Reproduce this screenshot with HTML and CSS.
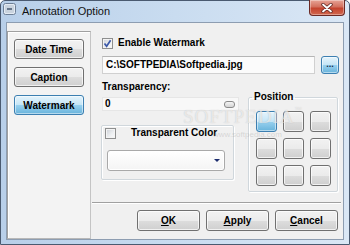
FILE: index.html
```html
<!DOCTYPE html>
<html>
<head>
<meta charset="utf-8">
<link rel="stylesheet" href="styles.css">
</head>
<body>
<div class="window">
  <div class="titlebar">
    <svg class="app-icon" width="13" height="12" viewBox="0 0 13 12">
      <rect x="0.5" y="0.5" width="12" height="11" rx="2" fill="#e4ebf3" stroke="#6d7f96"/>
      <rect x="2" y="2" width="9" height="8" rx="1" fill="#c9d3de"/>
      <rect x="4" y="5" width="5" height="2" fill="#66768a"/>
    </svg>
    <span class="title">Annotation Option</span>
    <div class="close">
      <svg width="14" height="10" viewBox="0 0 14 10">
        <path d="M3 1.5 L11 8.5 M11 1.5 L3 8.5" stroke="#5e2621" stroke-width="3.4" stroke-linecap="round"/>
        <path d="M3 1.5 L11 8.5 M11 1.5 L3 8.5" stroke="#ffffff" stroke-width="1.8" stroke-linecap="round"/>
      </svg>
    </div>
  </div>
  <div class="client">
    <div class="side">
      <div class="btn side-btn">Date Time</div>
      <div class="btn side-btn">Caption</div>
      <div class="btn side-btn active">Watermark</div>
    </div>
    <div class="main">
      <div class="check-row">
        <span class="checkbox checked">
          <svg width="9" height="9" viewBox="0 0 9 9"><path d="M1.5 4.5 L3.6 7.2 L7.6 1.2" fill="none" stroke="#3b58a8" stroke-width="1.7"/></svg>
        </span>
        <span class="label">Enable Watermark</span>
      </div>
      <div class="path-row">
        <div class="textbox">C:\SOFTPEDIA\Softpedia.jpg</div>
        <div class="btn active dots">...</div>
      </div>
      <div class="lower">
        <div class="left-col">
          <div class="label trans-label">Transparency:</div>
          <div class="slider">
            <span class="label">0</span>
            <span class="thumb"></span>
          </div>
          <div class="group">
            <div class="group-head">
              <span class="checkbox"></span>
              <span class="label group-title">Transparent Color</span>
            </div>
            <div class="combo"><span class="arrow"></span></div>
          </div>
        </div>
        <fieldset class="position">
          <legend class="label">Position</legend>
          <div class="pos-grid">
            <div class="btn pos active"></div>
            <div class="btn pos"></div>
            <div class="btn pos"></div>
            <div class="btn pos"></div>
            <div class="btn pos"></div>
            <div class="btn pos"></div>
            <div class="btn pos"></div>
            <div class="btn pos"></div>
            <div class="btn pos"></div>
          </div>
        </fieldset>
      </div>
      <div class="separator"></div>
      <div class="actions">
        <div class="btn action"><u>O</u>K</div>
        <div class="btn action"><u>A</u>pply</div>
        <div class="btn action"><u>C</u>ancel</div>
      </div>
    </div>
  </div>
  <div class="wm">SOFTPEDIA<span class="tm">™</span></div>
  <div class="wm-url">www.softpedia.com</div>
</div>
</body>
</html>
```
FILE: styles.css
```css
* { box-sizing: border-box; }
html, body { margin: 0; padding: 0; }
body {
  width: 350px; height: 245px; overflow: hidden;
  font-family: "Liberation Sans", Arial, sans-serif;
  font-size: 10px;
  color: #000;
}
.window {
  position: relative;
  width: 350px; height: 245px;
  border: 1px solid #4a5a70;
  border-radius: 5px 5px 0 0;
  background: linear-gradient(to right, #b8cfe9 0%, #c9dcf0 50%, #dae7f5 100%);
  display: flex; flex-direction: column;
}
.titlebar {
  height: 21px;
  display: flex; align-items: flex-start;
  padding-left: 2px;
}
.app-icon { margin-top: 2px; }
.title {
  margin-left: 6px; margin-top: 3px;
  font-size: 11px; line-height: 14px;
  color: #111;
}
.close {
  margin-left: auto; margin-right: 4px; margin-top: -1px;
  width: 36px; height: 16px;
  border: 1px solid #6b2a25;
  border-top: none;
  border-radius: 0 0 4px 4px;
  background: linear-gradient(#e7a496 0%, #d3705e 45%, #c4432e 55%, #d1684f 100%);
  box-shadow: inset 0 0 0 1px rgba(255,255,255,0.35);
  display: flex; align-items: center; justify-content: center;
}
.client {
  margin: 0 5px;
  height: 218px;
  background: #f0f0f0;
  border: 1px solid #8d9db1;
  display: flex;
}
.side {
  width: 84px;
  margin-top: 8px;
  height: 208px;
  border: 1px solid #a0a0a0;
  border-bottom-color: #b8b8b8;
  border-right-color: #c4c4c4;
  box-shadow: inset 1px 1px 0 #fff;
  background: #f3f3f3;
  padding: 7px 6px 0 6px;
  display: flex; flex-direction: column; gap: 8px;
}
.btn {
  border: 1px solid #707070;
  border-radius: 3px;
  background: linear-gradient(#f2f2f2 0%, #ebebeb 50%, #dddddd 51%, #cfcfcf 100%);
  box-shadow: inset 0 0 0 1px rgba(255,255,255,0.7);
  font-weight: bold;
  display: flex; align-items: center; justify-content: center;
}
.btn.active {
  border-color: #3c7fb1;
  background: linear-gradient(#e5f4fc 0%, #c4e5f6 50%, #98d1ef 51%, #68b3db 100%);
  box-shadow: inset 0 0 0 1px rgba(255,255,255,0.5);
}
.side-btn { height: 20px; }
.main {
  flex: 1;
  display: flex; flex-direction: column;
}
.label { font-weight: bold; font-size: 10px; line-height: 12px; }
.check-row {
  margin-top: 14px; padding-left: 11px;
  height: 12px;
  display: flex; align-items: center;
}
.checkbox {
  width: 11px; height: 11px;
  border: 1px solid #8e8f8f;
  background: linear-gradient(135deg, #cbcfd5 0%, #eef0f2 60%, #fafafa 100%);
  box-shadow: inset 0 0 0 1px #f4f4f4;
  display: flex; align-items: center; justify-content: center;
  flex: none;
}
.check-row .label { margin-left: 5px; }
.path-row {
  margin-top: 7px; padding-left: 11px;
  height: 18px;
  display: flex; gap: 6px;
}
.textbox {
  width: 213px; height: 18px;
  border: 1px solid #d0d0d0;
  border-top-color: #b5b5b5;
  background: #fbfbfb;
  font-weight: bold;
  padding-left: 3px;
  line-height: 16px;
}
.dots {
  width: 18px; height: 18px;
  font-size: 9px; line-height: 1;
  padding-bottom: 2px;
  color: #1b2b4b;
}
.lower {
  margin-top: 7px;
  display: flex;
  padding-left: 10px;
}
.left-col { width: 138px; display: flex; flex-direction: column; }
.trans-label { margin-left: 1px; height: 12px; }
.slider {
  margin-top: 4px; margin-left: 1px;
  width: 137px; height: 14px;
  background: #f8f8f8;
  border: 1px solid #e6e6e6;
  display: flex; align-items: center;
  padding-left: 2px;
}
.thumb {
  margin-left: auto; margin-right: 3px;
  width: 11px; height: 7px;
  border: 1px solid #8a8a8a;
  border-radius: 3px;
  background: linear-gradient(#f4f4f4, #d4d4d4);
}
.group {
  margin-top: 14px;
  width: 133px; height: 55px;
  border: 1px solid #d0d7dc;
  box-shadow: inset 1px 1px 0 #fff, 1px 1px 0 #fff;
  border-radius: 2px;
  padding: 1px 0 0 3px;
}
.group-head { display: flex; align-items: center; height: 12px; }
.group-title { margin-left: 15px; }
.combo {
  position: relative;
  margin-top: 11px; margin-left: 2px;
  width: 118px; height: 21px;
  border: 1px solid #a9a9a9;
  border-radius: 3px;
  background: linear-gradient(#ffffff, #f4f4f4);
  box-shadow: inset 0 0 0 1px #fff;
}
.arrow {
  position: absolute; right: 4px; top: 8px;
  width: 0; height: 0;
  border-left: 3px solid transparent;
  border-right: 3px solid transparent;
  border-top: 3px solid #1c2d6e;
}
.position {
  margin: 10px 0 0 9px;
  width: 90px; height: 101px;
  border: 1px solid #d0d7dc;
  border-radius: 2px;
  box-shadow: inset 1px 1px 0 #fff, 1px 1px 0 #fff;
  padding: 8px 6px 4px 7px;
  min-width: 0;
}
.position legend {
  padding: 0 2px;
  margin-left: -4px;
}
.pos-grid {
  display: grid;
  grid-template-columns: repeat(3, 21px);
  grid-auto-rows: 21px;
  gap: 6px;
}
.separator {
  margin: 10px 2px 0 1px;
  height: 2px;
  border-top: 1px solid #a0a0a0;
  border-bottom: 1px solid #ffffff;
}
.actions {
  margin-top: 6px;
  padding-right: 5px;
  display: flex; justify-content: flex-end; gap: 6px;
}
.action { width: 63px; height: 21px; }
.action u { text-decoration: underline; }
.wm {
  position: absolute; left: 182px; top: 105px;
  font-family: "Liberation Serif", serif;
  font-size: 19px; letter-spacing: 1px;
  color: rgba(255,255,255,0.6);
  text-shadow: 0 0 1px rgba(120,120,120,0.4);
  pointer-events: none;
}
.wm .tm { font-size: 7px; vertical-align: top; font-family: "Liberation Sans", sans-serif; }
.wm-url {
  position: absolute; left: 212px; top: 129px;
  font-size: 8px;
  color: rgba(160,160,160,0.35);
  pointer-events: none;
}
```
